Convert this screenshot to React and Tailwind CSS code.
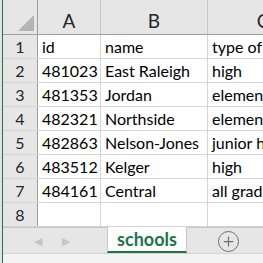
import { Plus } from 'lucide-react'

const rows = [
    ['id', 'name', 'type of'],
    ['481023', 'East Raleigh', 'high'],
    ['481353', 'Jordan', 'elemen'],
    ['482321', 'Northside', 'elemen'],
    ['482863', 'Nelson-Jones', 'junior h'],
    ['483512', 'Kelger', 'high'],
    ['484161', 'Central', 'all grad'],
    ['', '', ''],
]

const font = { fontFamily: 'Lato, "Liberation Sans", sans-serif' }

export default function App() {
    return (
        <div className="flex h-[263px] w-[263px] overflow-hidden bg-white" style={font}>
            {/* window edge */}
            <div className="w-[2px] bg-[#e3e3e3] flex-shrink-0" />
            <div className="w-px bg-[#217346] flex-shrink-0" />

            <div className="flex-1 flex flex-col overflow-hidden">
                {/* column headers */}
                <div className="flex h-[35px] flex-shrink-0 bg-[#e6e6e6] border-b border-[#9f9f9f] text-[19px] leading-none text-[#262626]">
                    <div className="w-[35px] flex-shrink-0 border-r border-[#9f9f9f] flex items-end justify-end pr-[3px] pb-[3px]">
                        <div className="w-0 h-0 border-l-[16px] border-l-transparent border-b-[16px] border-b-[#b4b4b4]" />
                    </div>
                    <div className="w-[63px] flex-shrink-0 border-r border-[#c8c8c8] flex items-end justify-center pb-[4px]">A</div>
                    <div className="w-[107px] flex-shrink-0 border-r border-[#c8c8c8] flex items-end justify-center pb-[4px]">B</div>
                    <div className="w-[110px] flex-shrink-0 flex items-end justify-center pb-[4px]">C</div>
                </div>

                {/* rows */}
                {rows.map((r, i) => (
                    <div key={i} className="flex h-[24px] flex-shrink-0 border-b border-[#d4d4d4] text-[16px] leading-none">
                        <div className="w-[35px] flex-shrink-0 bg-[#e6e6e6] border-r border-[#9f9f9f] flex items-center justify-center text-[#262626]">{i + 1}</div>
                        <div className="w-[63px] flex-shrink-0 border-r border-[#d4d4d4] flex items-center pl-[4px] whitespace-nowrap overflow-hidden">{r[0]}</div>
                        <div className="w-[107px] flex-shrink-0 border-r border-[#d4d4d4] flex items-center pl-[4px] whitespace-nowrap overflow-hidden">{r[1]}</div>
                        <div className="w-[110px] flex-shrink-0 flex items-center pl-[4px] whitespace-nowrap overflow-hidden">{r[2]}</div>
                    </div>
                ))}

                {/* sheet tabs */}
                <div className="flex h-[26px] flex-shrink-0 bg-[#e6e6e6] border-t border-[#c8c8c8]">
                    <div className="w-[104px] flex-shrink-0 flex items-center gap-[20px] pl-[31px] pt-[2px] text-[#c6c6c6] text-[11px]">
                        <span>◀</span>
                        <span>▶</span>
                    </div>
                    <div className="w-[80px] flex-shrink-0 -mt-px bg-white border-x border-[#c8c8c8] border-b-2 border-b-[#217346] flex items-center justify-center font-bold text-[18px] text-[#217346]">schools</div>
                    <div className="flex-1 flex items-center pl-[31px] pt-[2px]">
                        <Plus className="w-[21px] h-[21px] rounded-full border-[1.5px] border-[#6f6f6f] text-[#6f6f6f] p-[2px]" strokeWidth={2} />
                    </div>
                </div>
                <div className="flex-1 bg-[#f3f3f3] border-t border-[#d4d4d4]" />
            </div>
        </div>
    )
}
